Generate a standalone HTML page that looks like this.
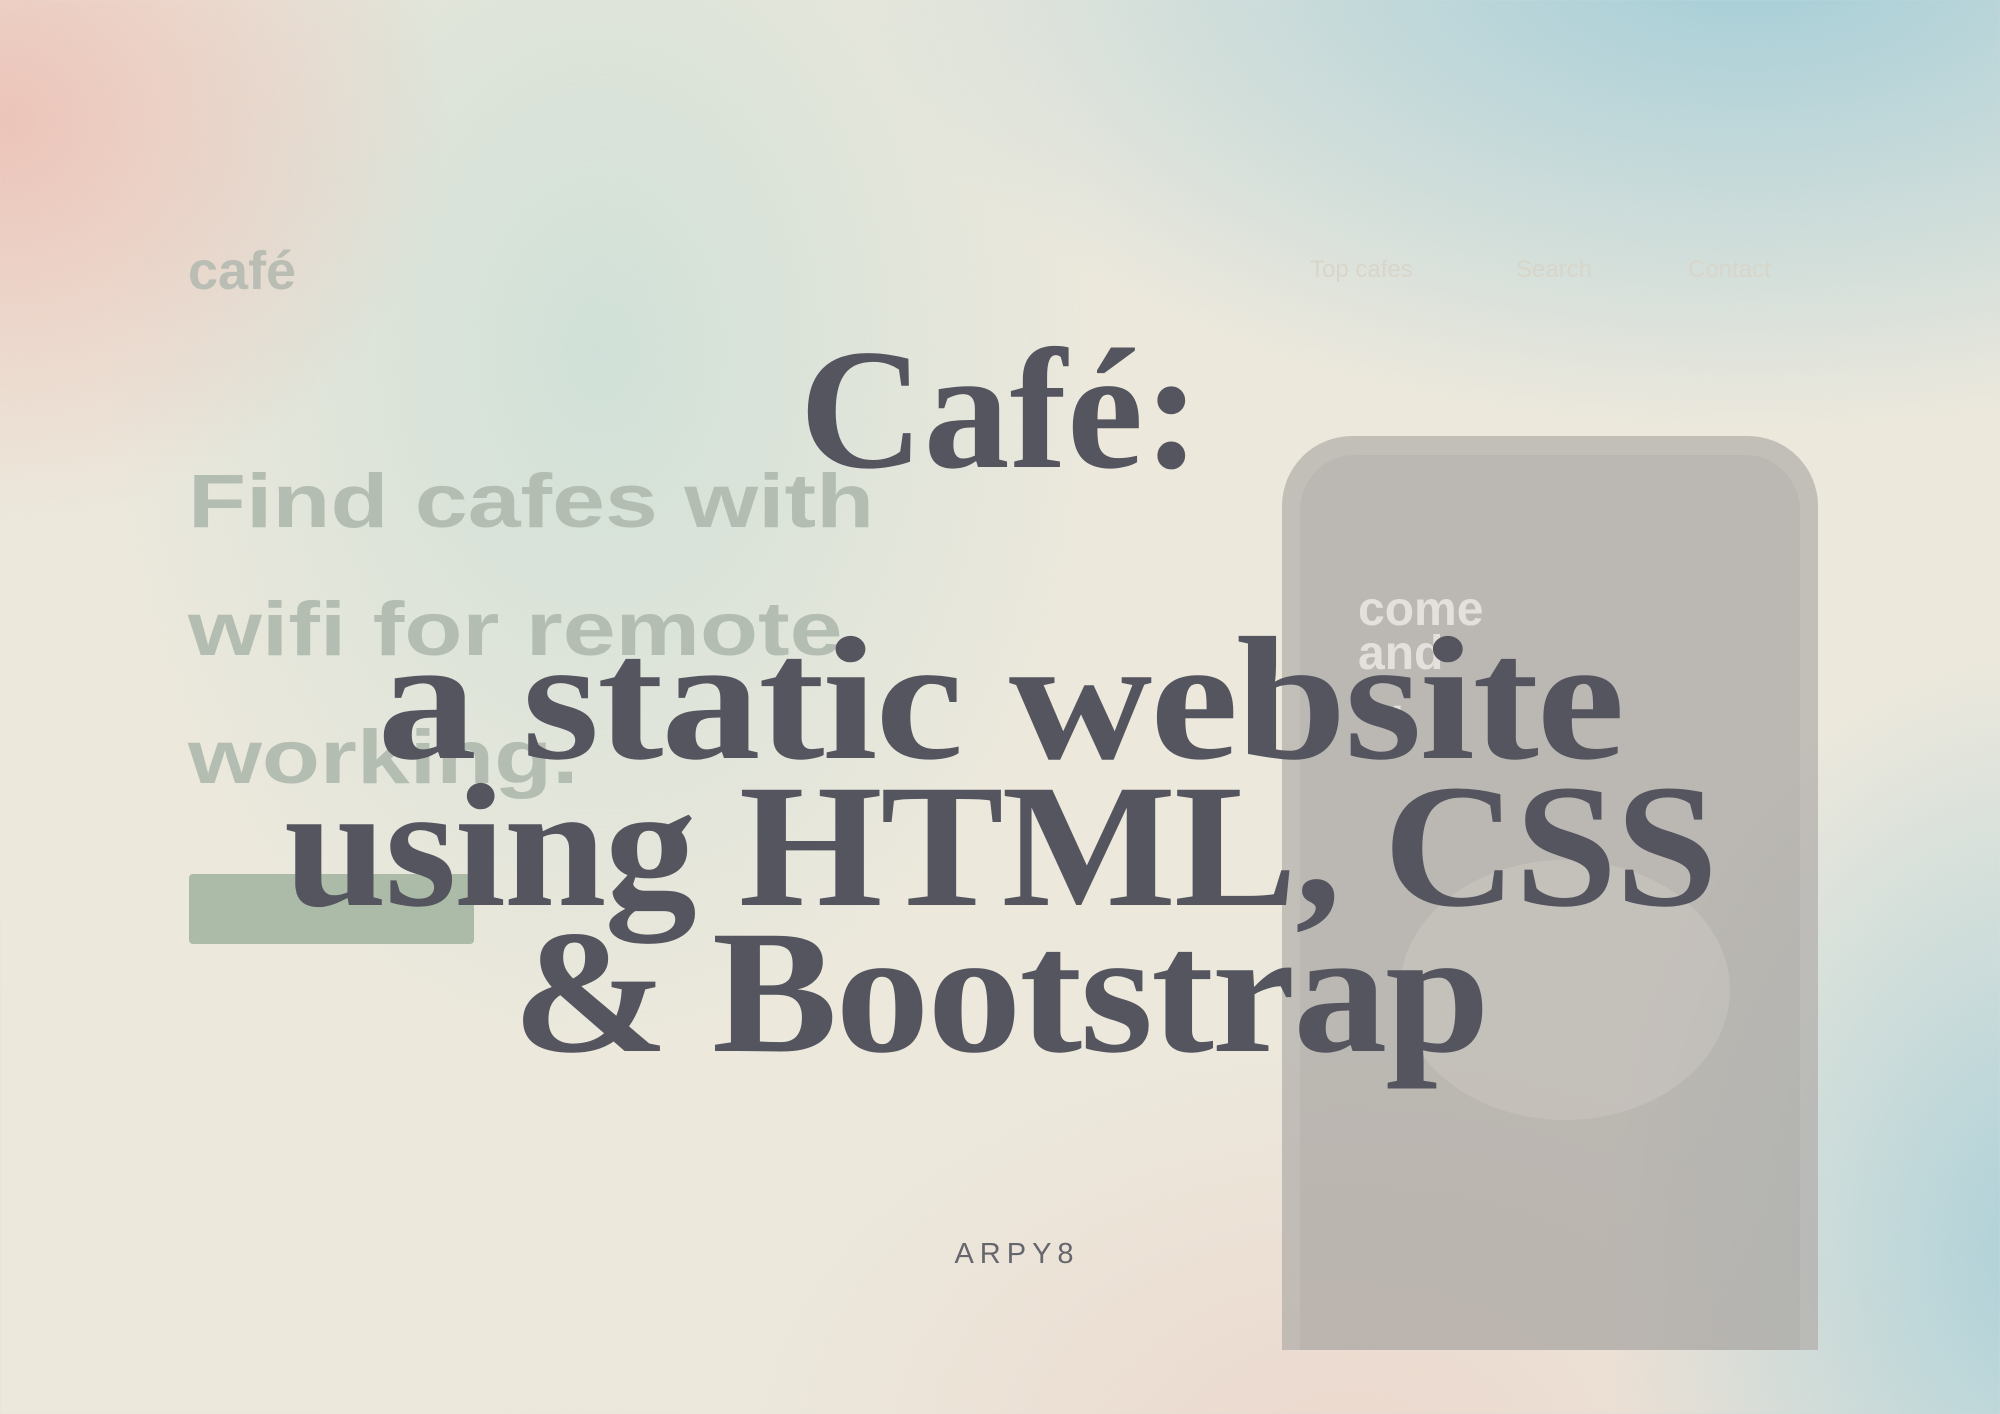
<!DOCTYPE html>
<html><head><meta charset="utf-8"><style>
html,body{margin:0;padding:0}
body{width:2000px;height:1414px;position:relative;overflow:hidden;font-family:"Liberation Sans",sans-serif;
background:
radial-gradient(ellipse 450px 400px at 0px 120px,rgba(236,180,170,.7),rgba(236,180,170,0) 100%),
radial-gradient(ellipse 900px 480px at 1750px -50px,rgba(150,200,215,.85),rgba(150,200,215,0) 100%),
radial-gradient(ellipse 500px 700px at 600px 350px,rgba(175,215,210,.45),rgba(175,215,210,0) 100%),
radial-gradient(ellipse 450px 600px at 2050px 1250px,rgba(150,200,215,.75),rgba(150,200,215,0) 100%),
radial-gradient(ellipse 600px 400px at 1350px 1450px,rgba(235,205,195,.6),rgba(235,205,195,0) 100%),
#ece8dc;}
.a{position:absolute;white-space:nowrap}
.g{color:#b3bdb1;font-weight:900;transform-origin:0 0;transform:scaleX(1.25)}
.t{font-family:"Liberation Serif",serif;font-weight:bold;color:#55555f;left:0;width:2000px;text-align:center;font-size:176px;line-height:176px;letter-spacing:-2px}
</style></head><body>
<div class="a" style="left:188px;top:240px;font-size:54px;color:#b9bdb3;font-weight:bold">café</div>
<div class="a" style="left:1310px;top:256px;font-size:24px;color:#d8d6ca">Top cafes</div>
<div class="a" style="left:1516px;top:256px;font-size:24px;color:#d8d6ca">Search</div>
<div class="a" style="left:1688px;top:256px;font-size:24px;color:#d8d6ca">Contact</div>
<div style="position:absolute;left:0;top:0;opacity:.72">
<div class="a" style="left:1282px;top:436px;width:536px;height:914px;border-radius:70px 70px 0 0;background:#b2aeab"></div>
<div class="a" style="left:1300px;top:455px;width:500px;height:895px;border-radius:55px 55px 0 0;background:#a9a5a2"></div>
<div class="a" style="left:1400px;top:860px;width:330px;height:260px;border-radius:50%;background:#b6b1ad"></div>
<div class="a" style="left:1358px;top:588px;font-size:48px;color:#e2dfdc;font-weight:bold;line-height:44px">come<br>and<br>…</div>
</div>
<div class="a g" style="left:188px;top:438px;font-size:76px;line-height:128px">Find cafes with<br>wifi for remote<br>working.</div>
<div class="a" style="left:189px;top:874px;width:285px;height:70px;background:#acbba8;border-radius:4px"></div>
<div class="a t" style="top:320px;font-size:172px;line-height:180px;letter-spacing:0">Café:</div>
<div class="a t" style="top:612px;transform:scaleX(1.13)">a static website</div>
<div class="a t" style="top:759px;transform:scaleX(1.05)">using HTML, CSS</div>
<div class="a t" style="top:905px;transform:scaleX(1.07)">&amp; Bootstrap</div>
<div class="a" style="left:0;width:2034px;text-align:center;top:1238px;font-size:29px;letter-spacing:6px;color:#66666e">ARPY8</div>
</body></html>
